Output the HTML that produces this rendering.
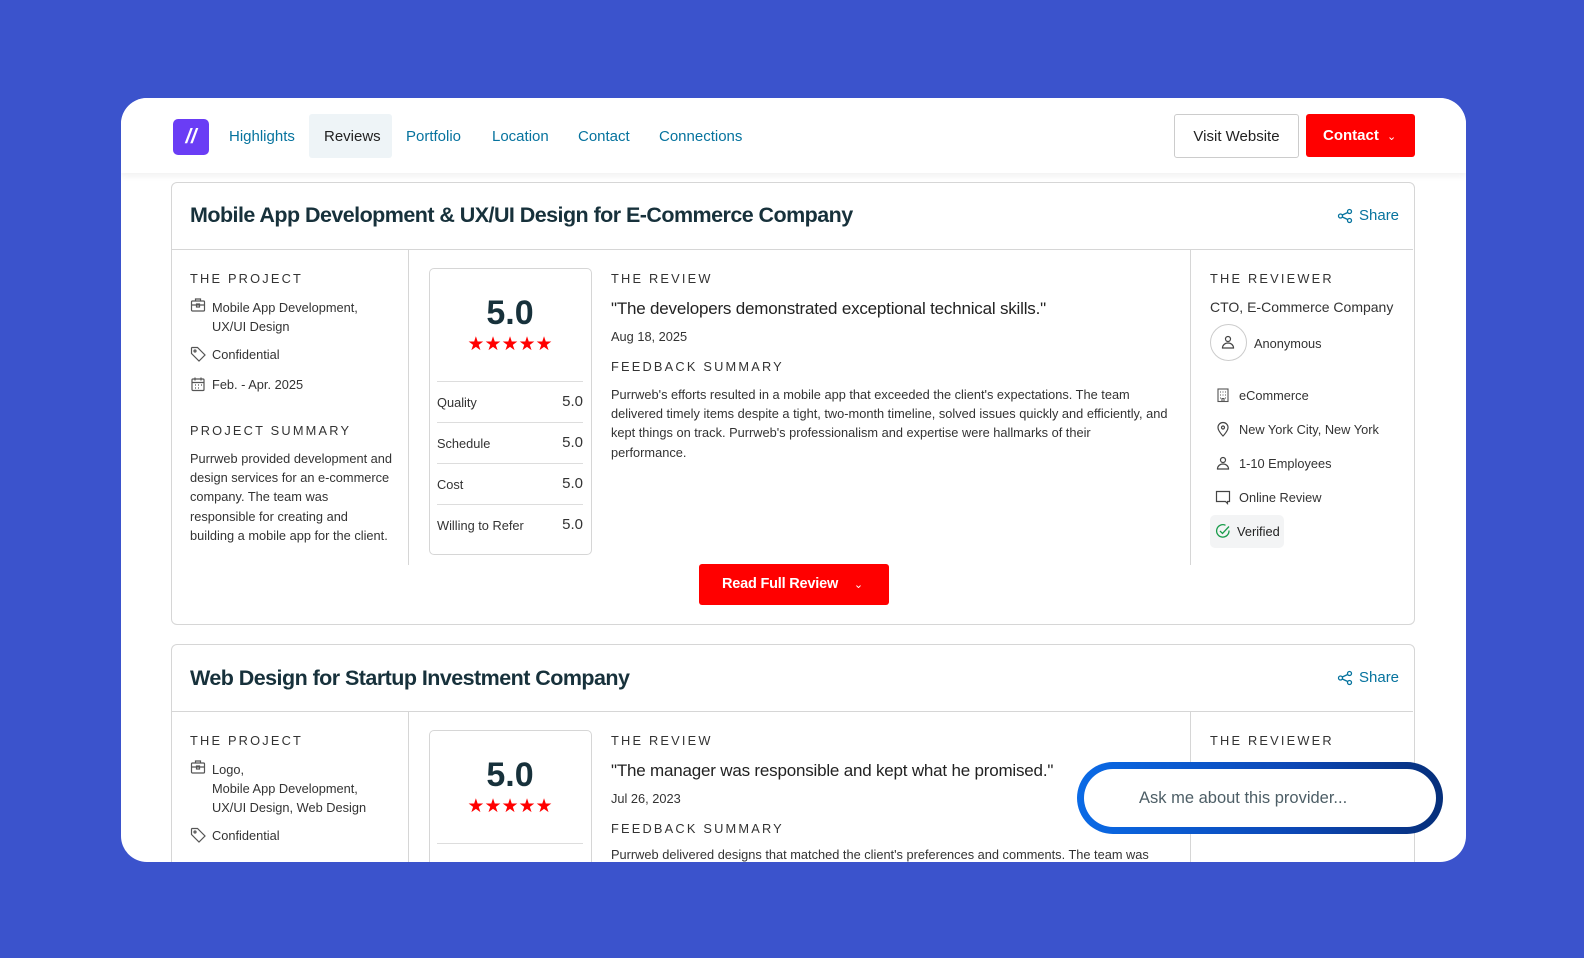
<!DOCTYPE html>
<html><head><meta charset="utf-8"><style>
*{box-sizing:border-box;margin:0;padding:0}
body{width:1584px;height:958px;background:#3b53cc;font-family:"Liberation Sans",Arial,sans-serif;position:relative;overflow:hidden;color:#222}
.panel{position:absolute;left:121px;top:98px;width:1345px;height:764px;background:#fff;border-radius:26px;overflow:hidden}
.a{position:absolute;white-space:nowrap}
.hdr{position:absolute;left:0;top:0;width:1345px;height:75px;background:#fff;box-shadow:0 3px 6px rgba(0,0,0,.06);z-index:2}
.nav{font-size:15px;color:#06739e;top:30px}
.card{position:absolute;left:50px;width:1244px;border:1.5px solid #d6d6d6;border-radius:6px;background:#fff}
.title{font-size:21.5px;font-weight:bold;color:#17313b;letter-spacing:-.55px}
.lbl{font-size:12.8px;letter-spacing:2.2px;color:#333}
.t{font-size:12.8px;color:#333}
.share{font-size:15px;color:#06739e}
.row{position:absolute;left:7px;width:146px;border-top:1.5px solid #ddd;font-size:12.8px;color:#333}
.row span{position:absolute;top:13px}
.row b{position:absolute;right:0;top:11px;font-weight:normal;font-size:15px;color:#333}
.ic{position:absolute;width:16px;height:16px}
.stars{font-size:19px;color:#f00;letter-spacing:0}
</style></head><body>
<div class="panel">
 <div class="hdr">
  <div class="a" style="left:52px;top:21px;width:36px;height:36px;background:#6a3df5;border-radius:5px;color:#fff;font-size:20px;font-style:italic;font-weight:bold;text-align:center;line-height:36px">//</div>
  <div class="a" style="left:188px;top:16px;width:83px;height:44px;background:#eef4f7;border-radius:3px"></div>
  <div class="a nav" style="left:108px">Highlights</div>
  <div class="a nav" style="left:203px;color:#222">Reviews</div>
  <div class="a nav" style="left:285px">Portfolio</div>
  <div class="a nav" style="left:371px">Location</div>
  <div class="a nav" style="left:457px">Contact</div>
  <div class="a nav" style="left:538px">Connections</div>
  <div class="a" style="left:1053px;top:16px;width:125px;height:44px;border:1.5px solid #ccc;border-radius:3px;font-size:15px;text-align:center;line-height:43px;color:#222">Visit Website</div>
  <div class="a" style="left:1185px;top:16px;width:109px;height:43px;background:#f00;border-radius:3px;font-size:15px;font-weight:bold;color:#fff;line-height:43px;padding-left:17px">Contact <span style="font-weight:normal;font-size:11px;margin-left:4px">&#x2304;</span></div>
 </div>

 <!-- card 1 -->
 <div class="card" style="top:84px;height:443px">
  <div class="a title" style="left:18px;top:20px">Mobile App Development &amp; UX/UI Design for E-Commerce Company</div>
  <svg class="a" style="left:1165px;top:25px" width="16" height="16" viewBox="0 0 16 16" fill="none" stroke="#06739e" stroke-width="1.3"><circle cx="3.5" cy="8" r="2"/><circle cx="12.5" cy="3.5" r="2"/><circle cx="12.5" cy="12.5" r="2"/><path d="M5.3 7 10.7 4.5M5.3 9 10.7 11.5"/></svg>
  <div class="a share" style="left:1187px;top:24px">Share</div>
  <div class="a" style="left:0;top:66px;width:1241px;border-top:1.5px solid #d6d6d6"></div>
  <div class="a" style="left:236px;top:66px;height:316px;border-left:1.5px solid #d6d6d6"></div>
  <div class="a" style="left:1018px;top:66px;height:316px;border-left:1.5px solid #d6d6d6"></div>

  <div class="a lbl" style="left:18px;top:88px">THE PROJECT</div>
  <svg class="ic" style="left:18px;top:114px" viewBox="0 0 16 16" fill="none" stroke="#555" stroke-width="1.2"><rect x="1.5" y="4" width="13" height="10" rx="1"/><path d="M5.5 4V2h5v2M1.5 8h13"/><rect x="6.5" y="7" width="3" height="3"/></svg>
  <div class="a t" style="left:40px;top:115px;line-height:19px">Mobile App Development,<br>UX/UI Design</div>
  <svg class="ic" style="left:18px;top:163px" viewBox="0 0 16 16" fill="none" stroke="#555" stroke-width="1.2"><path d="M1.5 2v5.5l7.5 7.5 6-6-7.5-7.5H2z"/><circle cx="5" cy="5" r="1"/></svg>
  <div class="a t" style="left:40px;top:164px">Confidential</div>
  <svg class="ic" style="left:18px;top:193px" viewBox="0 0 16 16" fill="none" stroke="#555" stroke-width="1.2"><rect x="2" y="3" width="12" height="11.5" rx="1"/><path d="M2 6.5h12M5 1.5v3M11 1.5v3M5 9h1M8 9h1M11 9h1M5 12h1M8 12h1"/></svg>
  <div class="a t" style="left:40px;top:194px">Feb. - Apr. 2025</div>
  <div class="a lbl" style="left:18px;top:240px">PROJECT SUMMARY</div>
  <div class="a t" style="left:18px;top:266px;line-height:19.2px">Purrweb provided development and<br>design services for an e-commerce<br>company. The team was<br>responsible for creating and<br>building a mobile app for the client.</div>

  <div class="a" style="left:257px;top:85px;width:163px;height:287px;border:1.5px solid #d6d6d6;border-radius:5px">
   <div class="a" style="left:0;width:160px;text-align:center;top:25px;font-size:34px;font-weight:bold;color:#17313b">5.0</div>
   <div class="a stars" style="left:0;width:160px;text-align:center;top:64px">★★★★★</div>
   <div class="row" style="top:112px;height:41px"><span>Quality</span><b>5.0</b></div>
   <div class="row" style="top:153px;height:41px"><span>Schedule</span><b>5.0</b></div>
   <div class="row" style="top:194px;height:41px"><span>Cost</span><b>5.0</b></div>
   <div class="row" style="top:235px;height:41px"><span>Willing to Refer</span><b>5.0</b></div>
  </div>

  <div class="a lbl" style="left:439px;top:88px">THE REVIEW</div>
  <div class="a" style="left:439px;top:116px;font-size:17px;color:#222;letter-spacing:-.2px">"The developers demonstrated exceptional technical skills."</div>
  <div class="a t" style="left:439px;top:146px">Aug 18, 2025</div>
  <div class="a lbl" style="left:439px;top:176px">FEEDBACK SUMMARY</div>
  <div class="a t" style="left:439px;top:202px;line-height:19.2px">Purrweb's efforts resulted in a mobile app that exceeded the client's expectations. The team<br>delivered timely items despite a tight, two-month timeline, solved issues quickly and efficiently, and<br>kept things on track. Purrweb's professionalism and expertise were hallmarks of their<br>performance.</div>

  <div class="a lbl" style="left:1038px;top:88px">THE REVIEWER</div>
  <div class="a" style="left:1038px;top:116px;font-size:14px;color:#333">CTO, E-Commerce Company</div>
  <div class="a" style="left:1038px;top:141px;width:37px;height:37px;border:1.5px solid #ccc;border-radius:50%"></div>
  <svg class="ic" style="left:1048px;top:151px" viewBox="0 0 16 16" fill="none" stroke="#444" stroke-width="1.2"><circle cx="8" cy="5" r="2.5"/><path d="M2.5 14c0-3 2.5-5 5.5-5s5.5 2 5.5 5z"/></svg>
  <div class="a t" style="left:1082px;top:153px">Anonymous</div>
  <svg class="ic" style="left:1043px;top:204px" viewBox="0 0 16 16" fill="none" stroke="#555" stroke-width="1.1"><rect x="3" y="2" width="10" height="12.5"/><path d="M5 5h1M7.5 5h1M10 5h1M5 8h1M7.5 8h1M10 8h1M5 11h1M10 11h1M7 14.5v-3h2v3"/></svg>
  <div class="a t" style="left:1067px;top:205px">eCommerce</div>
  <svg class="ic" style="left:1043px;top:238px" viewBox="0 0 16 16" fill="none" stroke="#444" stroke-width="1.2"><path d="M8 15s-5-5-5-8.5a5 5 0 0110 0C13 10 8 15 8 15z"/><circle cx="8" cy="6.5" r="1.5"/></svg>
  <div class="a t" style="left:1067px;top:239px">New York City, New York</div>
  <svg class="ic" style="left:1043px;top:272px" viewBox="0 0 16 16" fill="none" stroke="#444" stroke-width="1.2"><circle cx="8" cy="5" r="2.5"/><path d="M2.5 14c0-3 2.5-5 5.5-5s5.5 2 5.5 5z"/></svg>
  <div class="a t" style="left:1067px;top:273px">1-10 Employees</div>
  <svg class="ic" style="left:1043px;top:306px" viewBox="0 0 16 16" fill="none" stroke="#444" stroke-width="1.2"><path d="M1.5 2.5h13v10h-2v2l-2-2h-9z"/></svg>
  <div class="a t" style="left:1067px;top:307px">Online Review</div>
  <div class="a" style="left:1038px;top:332px;width:74px;height:33px;background:#f3f4f5;border-radius:5px"></div>
  <svg class="ic" style="left:1043px;top:340px" viewBox="0 0 16 16" fill="none" stroke="#1a9c4b" stroke-width="1.3"><path d="M14 7.5A6.2 6.2 0 1110.5 2.3"/><path d="M5 8l2.5 2.5L14 3.5"/></svg>
  <div class="a t" style="left:1065px;top:341px;color:#222">Verified</div>

  <div class="a" style="left:527px;top:381px;width:190px;height:41px;background:#f00;border-radius:3px;color:#fff;font-weight:bold;font-size:14.5px;line-height:41px;padding-left:23px;letter-spacing:-.2px">Read Full Review <span style="font-weight:normal;font-size:11px;margin-left:12px">&#x2304;</span></div>
 </div>

 <!-- card 2 -->
 <div class="card" style="top:546px;height:260px">
  <div class="a title" style="left:18px;top:21px">Web Design for Startup Investment Company</div>
  <svg class="a" style="left:1165px;top:25px" width="16" height="16" viewBox="0 0 16 16" fill="none" stroke="#06739e" stroke-width="1.3"><circle cx="3.5" cy="8" r="2"/><circle cx="12.5" cy="3.5" r="2"/><circle cx="12.5" cy="12.5" r="2"/><path d="M5.3 7 10.7 4.5M5.3 9 10.7 11.5"/></svg>
  <div class="a share" style="left:1187px;top:24px">Share</div>
  <div class="a" style="left:0;top:66px;width:1241px;border-top:1.5px solid #d6d6d6"></div>
  <div class="a" style="left:236px;top:66px;height:200px;border-left:1.5px solid #d6d6d6"></div>
  <div class="a" style="left:1018px;top:66px;height:200px;border-left:1.5px solid #d6d6d6"></div>
  <div class="a lbl" style="left:18px;top:88px">THE PROJECT</div>
  <svg class="ic" style="left:18px;top:114px" viewBox="0 0 16 16" fill="none" stroke="#555" stroke-width="1.2"><rect x="1.5" y="4" width="13" height="10" rx="1"/><path d="M5.5 4V2h5v2M1.5 8h13"/><rect x="6.5" y="7" width="3" height="3"/></svg>
  <div class="a t" style="left:40px;top:115px;line-height:19.2px">Logo,<br>Mobile App Development,<br>UX/UI Design, Web Design</div>
  <svg class="ic" style="left:18px;top:182px" viewBox="0 0 16 16" fill="none" stroke="#555" stroke-width="1.2"><path d="M1.5 2v5.5l7.5 7.5 6-6-7.5-7.5H2z"/><circle cx="5" cy="5" r="1"/></svg>
  <div class="a t" style="left:40px;top:183px">Confidential</div>
  <div class="a" style="left:257px;top:85px;width:163px;height:200px;border:1.5px solid #d6d6d6;border-radius:5px">
   <div class="a" style="left:0;width:160px;text-align:center;top:25px;font-size:34px;font-weight:bold;color:#17313b">5.0</div>
   <div class="a stars" style="left:0;width:160px;text-align:center;top:64px">★★★★★</div>
   <div class="row" style="top:112px;height:41px"></div>
  </div>
  <div class="a lbl" style="left:439px;top:88px">THE REVIEW</div>
  <div class="a" style="left:439px;top:116px;font-size:17px;color:#222;letter-spacing:-.2px">"The manager was responsible and kept what he promised."</div>
  <div class="a t" style="left:439px;top:146px">Jul 26, 2023</div>
  <div class="a lbl" style="left:439px;top:176px">FEEDBACK SUMMARY</div>
  <div class="a t" style="left:439px;top:202px">Purrweb delivered designs that matched the client's preferences and comments. The team was</div>
  <div class="a lbl" style="left:1038px;top:88px">THE REVIEWER</div>
  <div class="a" style="left:1038px;top:150px;width:37px;height:37px;border:1.5px solid #ccc;border-radius:50%"></div>
 </div>

 <div class="a" style="left:956px;top:664px;width:366px;height:72px;border-radius:36px;background:linear-gradient(90deg,#0a6ae6,#0c47b5 60%,#062f7a);padding:7px">
  <div style="width:100%;height:100%;background:#fff;border-radius:30px;font-size:16.5px;color:#4d5e66;padding-left:55px;line-height:58px">Ask me about this provider...</div>
 </div>
</div>
</body></html>
